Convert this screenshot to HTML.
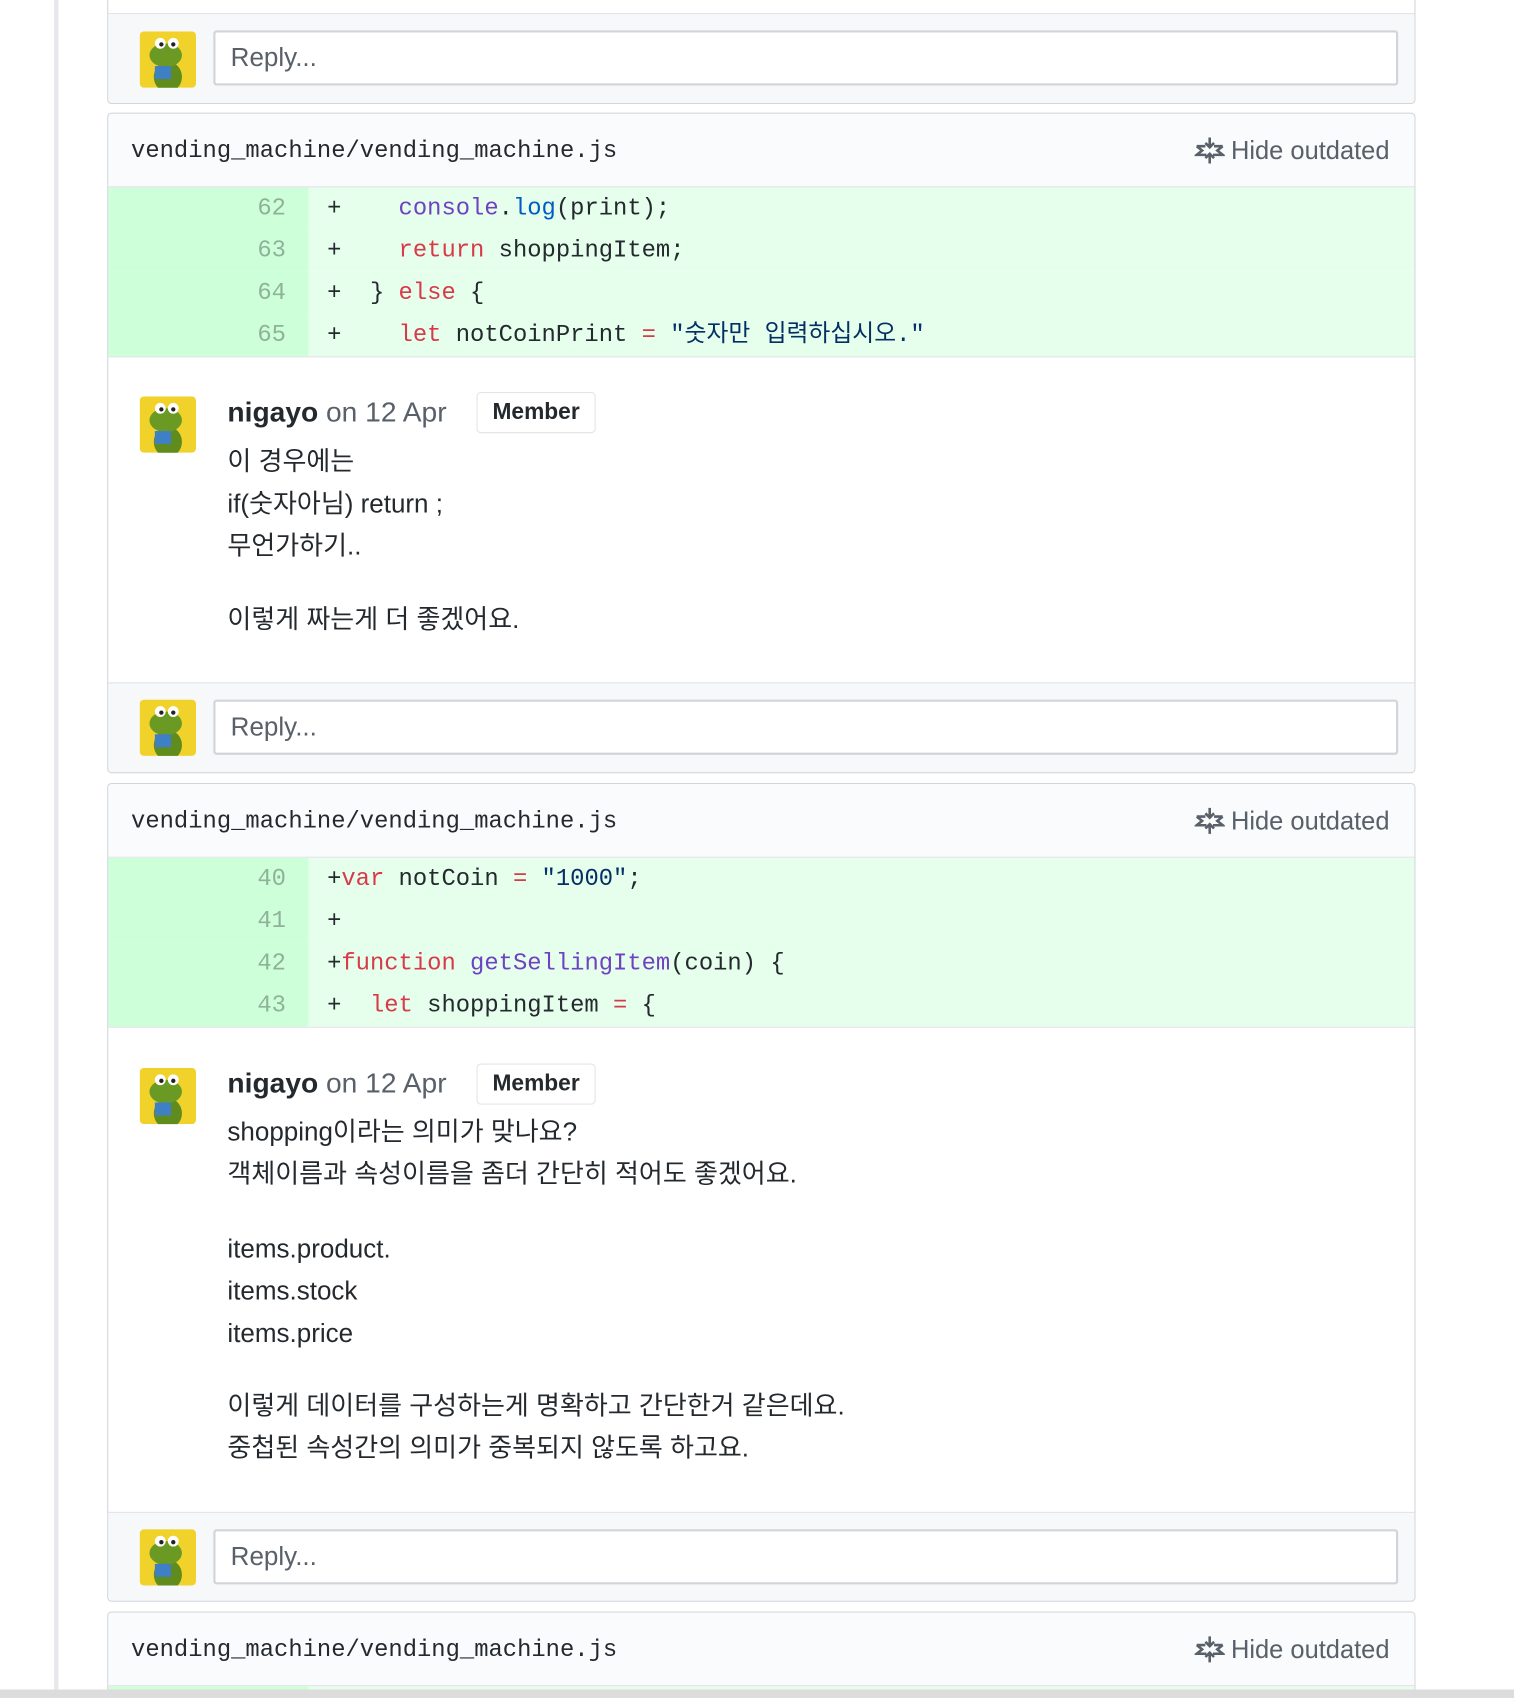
<!DOCTYPE html>
<html><head><meta charset="utf-8"><style>
*{box-sizing:border-box;margin:0;padding:0}
html,body{width:1514px;height:1698px;overflow:hidden;background:#fff}
#w{position:absolute;left:0;top:0;width:1398px;height:1568px;overflow:hidden;transform:scale(1.083);transform-origin:0 0;font-family:"Liberation Sans","Noto Sans CJK KR",sans-serif;color:#24292e}
.vl{position:absolute;left:50px;top:0;width:4px;height:1568px;background:#e6e8eb}
.card{position:absolute;left:99px;width:1208px;border:1px solid #d1d5da;border-radius:4px;background:#fff;overflow:hidden}
.hdr{height:68px;background:#fafbfc;border-bottom:1px solid #e1e4e8;position:relative}
.fn{position:absolute;left:21px;top:22px;font:22px "Liberation Mono",monospace;color:#24292e}
.ho{position:absolute;right:23px;top:20px;font-size:23.5px;color:#586069;display:flex;align-items:center}
.ho svg{margin-right:6px}
.row{height:39px;display:flex;font:22px/39px "Liberation Mono","Noto Sans CJK KR",monospace;white-space:pre}
.ln{width:185px;background:#cdffd8;text-align:right;padding-right:21px;color:rgba(27,31,35,.35)}
.cd{flex:1;background:#e6ffed;padding-left:17px}
.k{color:#d73a49}.p{color:#6f42c1}.b{color:#005cc5}.s{color:#032f62}
.cm{position:relative}
.av{position:absolute;width:52px;height:52px;border-radius:4px;overflow:hidden}
.name{position:absolute;left:110px;font-size:26px;white-space:nowrap}
.name b{font-weight:bold}.name span{color:#586069}
.badge{position:absolute;left:340px;width:110px;height:38px;border:1px solid #e1e4e8;border-radius:4px;font-size:21px;font-weight:bold;text-align:center;line-height:36px}
.body{position:absolute;left:110px;font-size:24px;line-height:39px}
.rp{background:#f6f8fa;border-top:1px solid #e1e4e8;height:83px;position:relative}
.inp{position:absolute;left:97px;top:15px;width:1094px;height:51px;background:#fff;border:2px solid #d1d5da;border-radius:3px;font-size:24px;color:#586069;padding-left:14px;line-height:47px}
</style></head><body><div id="w">
<div class="vl"></div>
<svg width="0" height="0" style="position:absolute"><defs>
<symbol id="fr" viewBox="0 0 52 52"><rect width="52" height="52" fill="#f0d22a"/><ellipse cx="26" cy="42" rx="13" ry="14" fill="#5f8c1d"/><ellipse cx="24" cy="22" rx="15" ry="11" fill="#6a9a23"/><circle cx="19" cy="11" r="5" fill="#fff"/><circle cx="31" cy="11" r="5" fill="#fff"/><circle cx="20" cy="12" r="2" fill="#222"/><circle cx="31" cy="12" r="2" fill="#222"/><rect x="14" y="32" width="15" height="12" fill="#3f7fc4"/></symbol>
<symbol id="ic" viewBox="0 0 28 28"><path d="M14 2v8M10 7l4 4 4-4M14 26v-8M10 21l4-4 4 4M2 10l5 4-5 4h9M26 10l-5 4 5 4h-9M2 10h8M26 10h-8" fill="none" stroke="#586069" stroke-width="2.4"/></symbol>
</defs></svg>

<div class="card" style="top:-20px;height:116px">
<div style="height:31px"></div>
<div class="rp" style="height:84px"><svg class="av" style="left:29px;top:16px" width="52" height="52"><use href="#fr"/></svg><div class="inp">Reply...</div></div>
</div>

<div class="card" style="top:104px;height:610px">
<div class="hdr"><div class="fn">vending_machine/vending_machine.js</div><div class="ho"><svg width="28" height="28"><use href="#ic"/></svg>Hide outdated</div></div>
<div class="row"><div class="ln">62</div><div class="cd">+    <span class="p">console</span>.<span class="b">log</span>(print);</div></div>
<div class="row"><div class="ln">63</div><div class="cd">+    <span class="k">return</span> shoppingItem;</div></div>
<div class="row"><div class="ln">64</div><div class="cd">+  } <span class="k">else</span> {</div></div>
<div class="row"><div class="ln">65</div><div class="cd">+    <span class="k">let</span> notCoinPrint <span class="k">=</span> <span class="s">"숫자만 입력하십시오."</span></div></div>
<div class="cm" style="height:301px;border-top:1px solid #e1e4e8">
<svg class="av" style="left:29px;top:36px" width="52" height="52"><use href="#fr"/></svg>
<div class="name" style="top:35px"><b>nigayo</b> <span>on 12 Apr</span></div>
<div class="badge" style="top:32px">Member</div>
<div class="body" style="top:77px">이 경우에는<br>if(숫자아님) return ;<br>무언가하기..<br><div style="height:29px"></div>이렇게 짜는게 더 좋겠어요.</div>
</div>
<div class="rp"><svg class="av" style="left:29px;top:15px" width="52" height="52"><use href="#fr"/></svg><div class="inp">Reply...</div></div>
</div>

<div class="card" style="top:723px;height:756px">
<div class="hdr"><div class="fn">vending_machine/vending_machine.js</div><div class="ho"><svg width="28" height="28"><use href="#ic"/></svg>Hide outdated</div></div>
<div class="row"><div class="ln">40</div><div class="cd">+<span class="k">var</span> notCoin <span class="k">=</span> <span class="s">"1000"</span>;</div></div>
<div class="row"><div class="ln">41</div><div class="cd">+</div></div>
<div class="row"><div class="ln">42</div><div class="cd">+<span class="k">function</span> <span class="p">getSellingItem</span>(coin) {</div></div>
<div class="row"><div class="ln">43</div><div class="cd">+  <span class="k">let</span> shoppingItem <span class="k">=</span> {</div></div>
<div class="cm" style="height:448px;border-top:1px solid #e1e4e8">
<svg class="av" style="left:29px;top:37px" width="52" height="52"><use href="#fr"/></svg>
<div class="name" style="top:36px"><b>nigayo</b> <span>on 12 Apr</span></div>
<div class="badge" style="top:33px">Member</div>
<div class="body" style="top:77px">shopping이라는 의미가 맞나요?<br>객체이름과 속성이름을 좀더 간단히 적어도 좋겠어요.<br><div style="height:30px"></div>items.product.<br>items.stock<br>items.price<br><div style="height:28px"></div>이렇게 데이터를 구성하는게 명확하고 간단한거 같은데요.<br>중첩된 속성간의 의미가 중복되지 않도록 하고요.</div>
</div>
<div class="rp"><svg class="av" style="left:29px;top:15px" width="52" height="52"><use href="#fr"/></svg><div class="inp">Reply...</div></div>
</div>

<div class="card" style="top:1488px;height:100px">
<div class="hdr"><div class="fn">vending_machine/vending_machine.js</div><div class="ho"><svg width="28" height="28"><use href="#ic"/></svg>Hide outdated</div></div>
<div class="row"><div class="ln"></div><div class="cd"></div></div>
</div>
<div style="position:absolute;left:0;top:1560px;width:1398px;height:8px;background:#dcdcdc"></div>
</div></body></html>
